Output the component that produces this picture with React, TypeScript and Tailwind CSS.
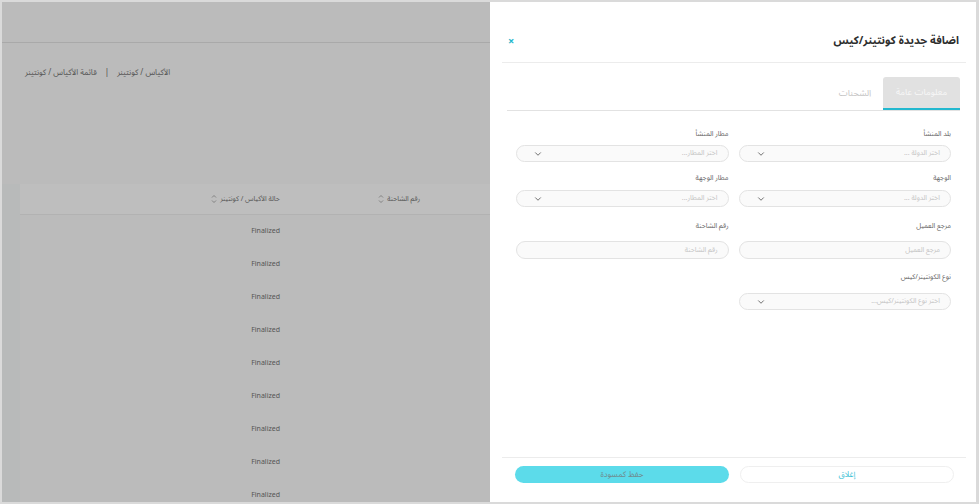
import { ChevronDown } from 'lucide-react';

const font = { fontFamily: '"Noto Sans Arabic", "Noto Sans", "DejaVu Sans", sans-serif' };

function SortIcon() {
    return (
        <svg width="6" height="10" viewBox="0 0 6 10" fill="none" stroke="#7a7a7a" strokeWidth="0.9">
            <path d="M1 3.5 L3 1.5 L5 3.5" />
            <path d="M1 6.5 L3 8.5 L5 6.5" />
        </svg>
    );
}

function SelectField({ label, placeholder, labelGap }: { label: string; placeholder: string; labelGap: string }) {
    return (
        <div className="flex flex-col">
            <label className={`text-[7px] leading-[8px] text-[#666] ${labelGap}`}>{label}</label>
            <div className="h-[17px] rounded-full border border-[#e3e3e3] bg-[#fafafa] flex items-center justify-between pr-[10px] pl-[16px]">
                <span className="text-[7px] text-[#c4c4c4]">{placeholder}</span>
                <ChevronDown className="w-[10px] h-[10px] text-[#555]" strokeWidth={2} />
            </div>
        </div>
    );
}

function InputField({ label, placeholder, labelGap }: { label: string; placeholder: string; labelGap: string }) {
    return (
        <div className="flex flex-col">
            <label className={`text-[7px] leading-[8px] text-[#666] ${labelGap}`}>{label}</label>
            <div className="h-[18px] rounded-full border border-[#e3e3e3] bg-[#fafafa] flex items-center pr-[10px]">
                <span className="text-[7px] text-[#c4c4c4]">{placeholder}</span>
            </div>
        </div>
    );
}

export default function App() {
    const rows = Array.from({ length: 9 });

    return (
        <div className="w-[979px] h-[504px] overflow-hidden border-t-2 border-l-2 border-b-2 border-r-[3px] border-[#dadada] flex" style={font}>
            {/* Page behind the overlay */}
            <div className="w-[488px] h-full bg-[#bbbbbb] flex flex-col overflow-hidden">
                <div className="h-[41px] shrink-0 border-b border-[#a9a9a9]"></div>
                <div className="flex items-center gap-[8px] pl-[23px] mt-[24px] text-[8px] text-[#555]">
                    <span>قائمة الأكياس / كونتينر</span>
                    <span className="text-[#444]">|</span>
                    <span>الأكياس / كونتينر</span>
                </div>
                <div className="flex flex-1 mt-[105px]">
                    <div className="w-[18px] bg-[#b8baba]"></div>
                    <div className="flex-1 flex flex-col">
                        <div className="h-[31px] shrink-0 bg-[#bebebe] border-b border-[#b2b2b2] flex flex-row-reverse text-[7px] text-[#555]">
                            <div className="w-[70px]"></div>
                            <div className="w-[140px] flex items-center justify-end gap-[3px]">
                                <SortIcon />
                                <span>رقم الشاحنة</span>
                            </div>
                            <div className="w-[140px] flex items-center justify-end gap-[3px]">
                                <SortIcon />
                                <span>حالة الأكياس / كونتينر</span>
                            </div>
                        </div>
                        {rows.map((_, i) => (
                            <div key={i} className="h-[33px] shrink-0 flex flex-row-reverse text-[7px] text-[#555]">
                                <div className="w-[70px]"></div>
                                <div className="w-[140px]"></div>
                                <div className="w-[140px] flex items-center justify-end">Finalized</div>
                            </div>
                        ))}
                    </div>
                </div>
            </div>

            {/* Drawer */}
            <div dir="rtl" className="w-[486px] h-full bg-white flex flex-col">
                <div className="h-[61px] shrink-0 mr-[10px] ml-[12px] border-b border-[#ececec] flex items-center justify-between pt-[18px] pr-[7px] pl-[6px]">
                    <h2 className="text-[11px] font-bold text-[#2e2e2e]">اضافة جديدة كونتينر/كيس</h2>
                    <span className="text-[11px] font-bold text-[#27b7cc] leading-none">×</span>
                </div>

                <div className="mt-[14px] mr-[16px] ml-[17px]">
                    <div className="flex items-end border-b border-[#e2e2e2] h-[34px]">
                        <div className="h-[33px] w-[77px] bg-[#e1e1e1] rounded-t-[3px] border-b-2 border-[#22b8cf] flex items-center justify-center text-[9px] text-[#f7f7f7]">
                            معلومات عامة
                        </div>
                        <div className="h-[33px] w-[56px] flex items-center justify-center text-[9px] text-[#c6c6c6]">
                            الشحنات
                        </div>
                    </div>

                    <div className="grid grid-cols-2 gap-x-[10px] px-[9px] pt-[19px]">
                        <SelectField label="بلد المنشأ" placeholder="اختر الدولة ..." labelGap="mb-[7px]" />
                        <SelectField label="مطار المنشأ" placeholder="اختر المطار..." labelGap="mb-[7px]" />
                        <div className="mt-[12px]">
                            <SelectField label="الوجهة" placeholder="اختر الدولة ..." labelGap="mb-[8px]" />
                        </div>
                        <div className="mt-[12px]">
                            <SelectField label="مطار الوجهة" placeholder="اختر المطار..." labelGap="mb-[8px]" />
                        </div>
                        <div className="mt-[15px]">
                            <InputField label="مرجع العميل" placeholder="مرجع العميل" labelGap="mb-[11px]" />
                        </div>
                        <div className="mt-[15px]">
                            <InputField label="رقم الشاحنة" placeholder="رقم الشاحنة" labelGap="mb-[11px]" />
                        </div>
                        <div className="mt-[14px]">
                            <SelectField label="نوع الكونتينر/كيس" placeholder="اختر نوع الكونتينر/كيس..." labelGap="mb-[12px]" />
                        </div>
                    </div>
                </div>

                <div className="flex-1"></div>

                <div className="shrink-0 mr-[10px] ml-[12px] border-t border-[#ececec] pt-[8px] pb-[19px] pr-[12px] pl-[12px] flex gap-[11px]">
                    <button className="w-[214px] h-[17px] rounded-full border border-[#efefef] bg-white text-[8px] text-[#3fc3d6]">
                        إغلاق
                    </button>
                    <button className="w-[214px] h-[17px] rounded-full bg-[#5cdbea] text-[8px] text-[#6f8b8f]">
                        حفظ كمسودة
                    </button>
                </div>
            </div>
        </div>
    );
}
